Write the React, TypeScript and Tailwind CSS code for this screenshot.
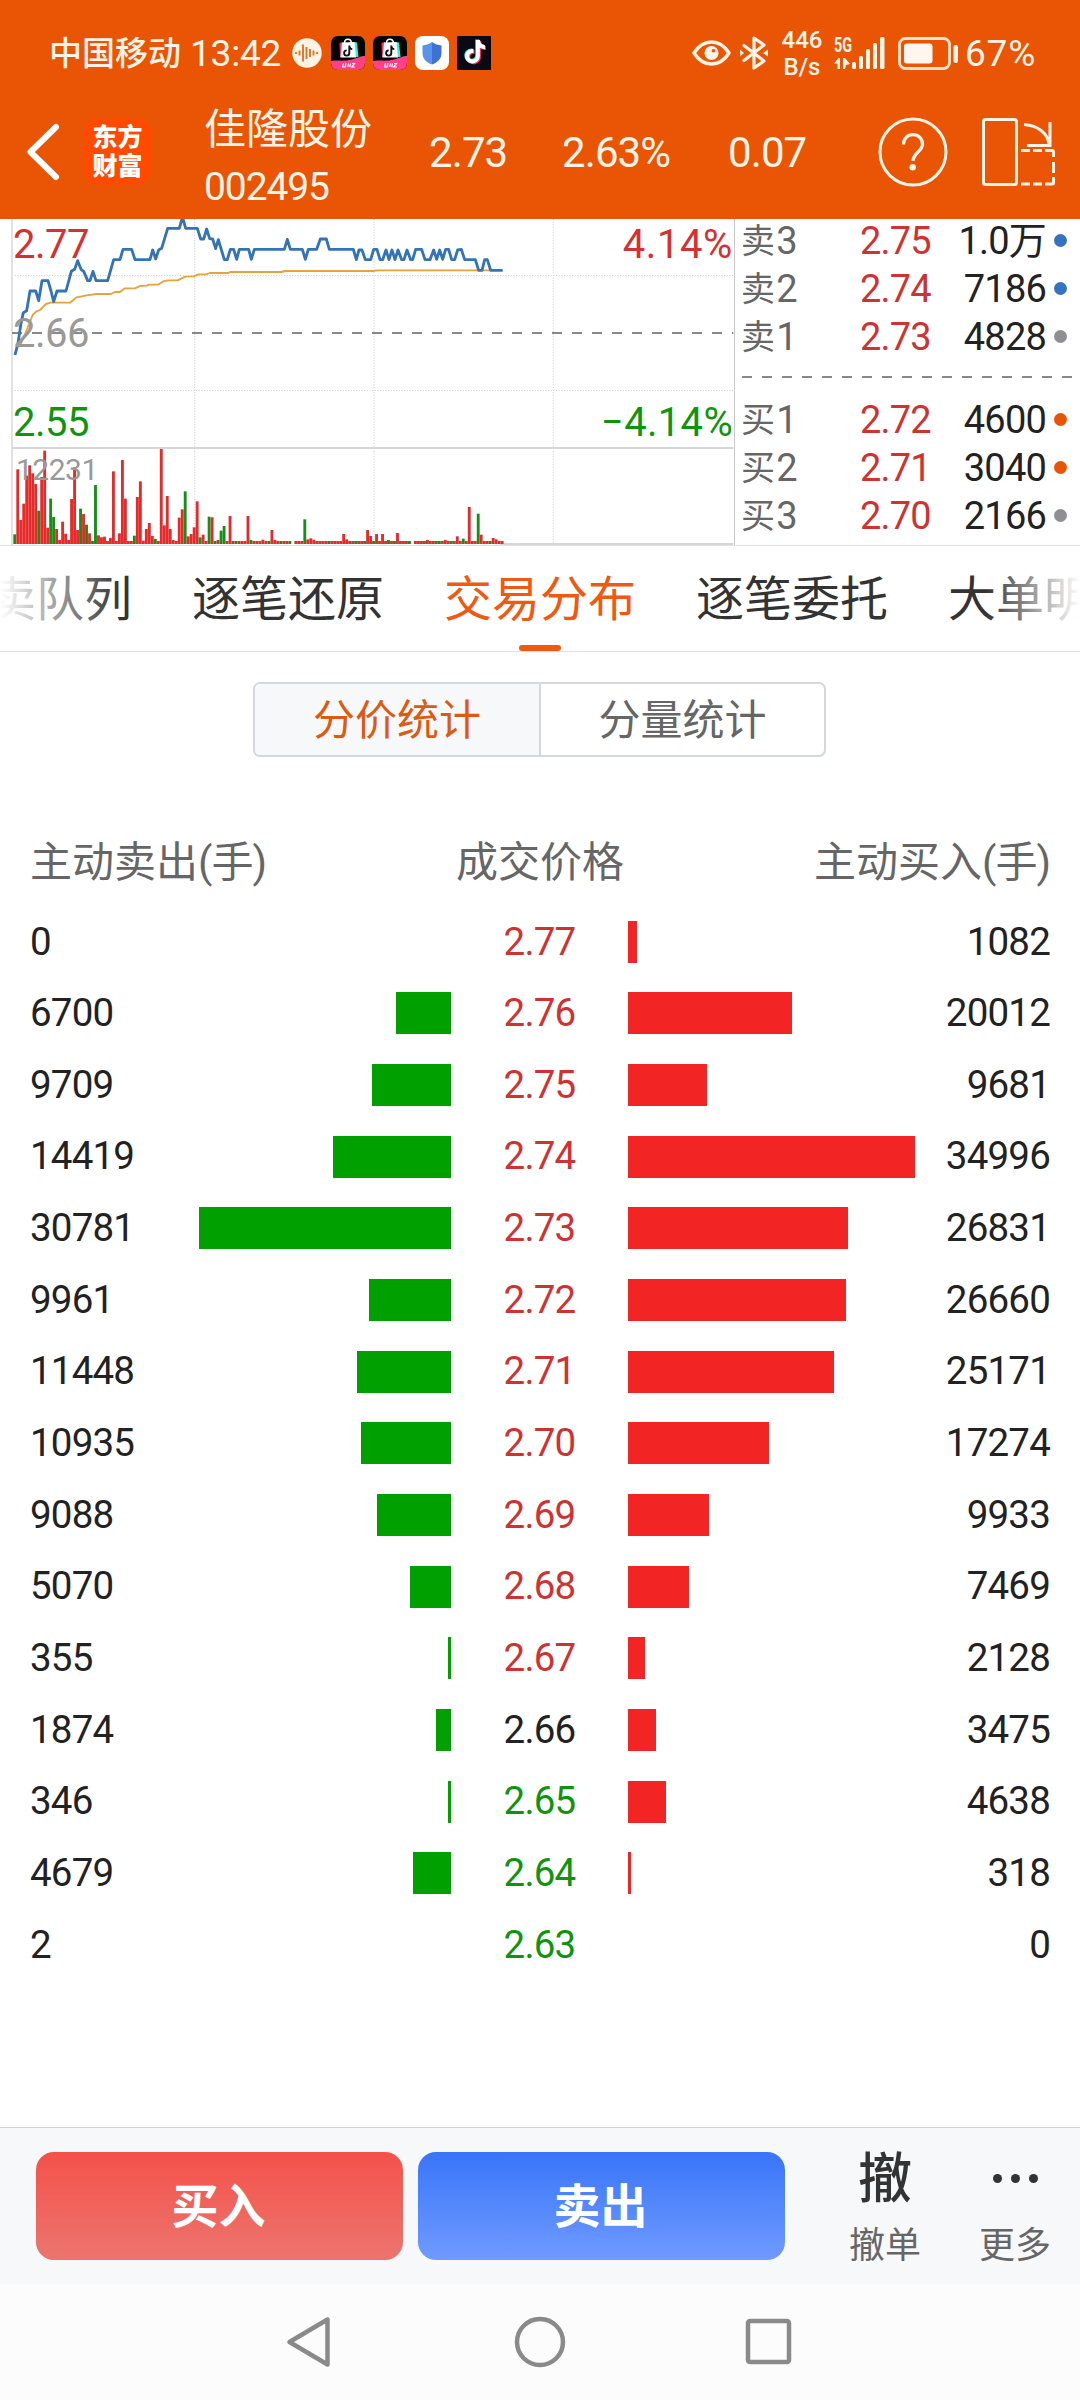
import type { ReactNode } from "react";
import clsx from "clsx";

type Tone = "up" | "down" | "flat";

interface PriceLevel {
  price: string;
  sell: number;
  buy: number;
  tone: Tone;
}

interface BookRow {
  label: string;
  price: string;
  volume: string;
  dot: string;
}

const LEVELS: PriceLevel[] = [
  { price: "2.77", sell: 0, buy: 1082, tone: "up" },
  { price: "2.76", sell: 6700, buy: 20012, tone: "up" },
  { price: "2.75", sell: 9709, buy: 9681, tone: "up" },
  { price: "2.74", sell: 14419, buy: 34996, tone: "up" },
  { price: "2.73", sell: 30781, buy: 26831, tone: "up" },
  { price: "2.72", sell: 9961, buy: 26660, tone: "up" },
  { price: "2.71", sell: 11448, buy: 25171, tone: "up" },
  { price: "2.70", sell: 10935, buy: 17274, tone: "up" },
  { price: "2.69", sell: 9088, buy: 9933, tone: "up" },
  { price: "2.68", sell: 5070, buy: 7469, tone: "up" },
  { price: "2.67", sell: 355, buy: 2128, tone: "up" },
  { price: "2.66", sell: 1874, buy: 3475, tone: "flat" },
  { price: "2.65", sell: 346, buy: 4638, tone: "down" },
  { price: "2.64", sell: 4679, buy: 318, tone: "down" },
  { price: "2.63", sell: 2, buy: 0, tone: "down" },
];

const SELLS: BookRow[] = [
  { label: "卖3", price: "2.75", volume: "1.0万", dot: "bg-[#3373c0]" },
  { label: "卖2", price: "2.74", volume: "7186", dot: "bg-[#3373c0]" },
  { label: "卖1", price: "2.73", volume: "4828", dot: "bg-[#8e8e93]" },
];

const BUYS: BookRow[] = [
  { label: "买1", price: "2.72", volume: "4600", dot: "bg-[#e95504]" },
  { label: "买2", price: "2.71", volume: "3040", dot: "bg-[#e95504]" },
  { label: "买3", price: "2.70", volume: "2166", dot: "bg-[#8e8e93]" },
];

const TABS = ["买卖队列", "逐笔还原", "交易分布", "逐笔委托", "大单明细"];

const MAX_VOLUME = 34996;
const MAX_BAR = 286.5;

const PRICE_LINE =
  "45,435 54,400 63,340 70,308 80,302 90,243 107,243 116,272 126,212 144,212 153,243 161,275 171,243 198,243 214,184 224,178 233,152 243,178 251,184 263,212 270,212 279,184 288,212 323,212 341,149 360,149 369,118 395,118 405,149 450,149 458,120 467,147 476,120 485,115 503,55 538,55 545,30 550,30 557,55 592,55 602,87 611,87 620,57 629,86 638,87 647,116 655,89 673,149 682,149 691,118 701,118 710,148 718,118 746,118 754,148 763,118 853,118 862,88 871,118 907,118 916,148 925,118 950,118 961,87 979,87 988,118 1060,118 1069,149 1077,120 1086,120 1096,149 1112,149 1121,118 1131,118 1140,149 1148,149 1158,120 1167,149 1176,120 1185,149 1194,120 1205,149 1212,149 1221,120 1232,149 1238,149 1247,118 1265,118 1275,149 1290,149 1301,120 1310,148 1319,120 1328,148 1337,118 1346,118 1355,149 1364,149 1373,120 1384,118 1394,149 1426,149 1436,181 1446,181 1454,149 1462,149 1472,181 1508,181";

const AVERAGE_LINE =
  "62,403 80,360 98,315 108,305 120,300 138,282 152,278 210,278 230,262 260,256 290,252 333,252 345,246 360,246 375,235 405,235 420,228 440,227 448,224 475,224 490,214 503,211 533,211 555,200 582,199 595,193 618,193 630,189 685,189 690,186 845,186 855,183 1120,183 1132,181 1470,181";

// One entry per minute, negative = falling minute (green), 0 = no trade
const VOLUMES = [
  -29, 224, 72, 121, 205, 236, 212, 180, -100, 201, 280, 49, -136, -81, 45, 12, 67, 31, 12, 135,
  230, 42, -106, 90, -58, 32, -9, -177, 26, 20, 22, 9, 18, 218, 9, 32, 252, 136, 9, 9,
  -25, 141, 188, 10, 45, 63, 24, -15, 9, 285, 56, 144, 45, 12, 9, 79, 104, -158, 23, 30,
  50, 128, -20, 28, 9, -82, 80, -9, 12, -40, -54, 9, 84, 9, -9, 9, 9, 9, 84, -12,
  9, 9, 9, 13, 9, -9, 42, 12, 9, -9, 9, 9, -9, 0, 9, 9, 9, -74, 14, 17,
  13, 9, 9, 9, 9, -9, 9, 9, 9, 9, 30, 14, 9, 9, -9, 9, 9, -9, 42, 24,
  -9, 30, 9, 30, 9, -12, 9, -9, 33, 9, 9, 9, -9, 0, 9, 9, 9, -9, 12, 9,
  9, -9, -9, 9, 12, 9, -9, 9, 23, 9, -16, 9, 111, 9, 9, -91, 28, 9, 9, -9,
  18, 14, 9, 9,
];

function StatusBar() {
  return (
    <div className="flex h-[106px] items-center text-[#fff3e6]">
      <span className="ml-[49px] w-[141px] text-[33px] leading-none font-medium">中国移动</span>
      <span className="w-[102px] text-[37px] leading-none tracking-[-0.2px]">13:42</span>
      <svg className="h-[30px] w-[30px]" viewBox="0 0 30 30">
        <circle cx="15" cy="15" r="14.7" fill="#fff3e6" />
        <path
          d="M4 14v2M7.500 12.500v5M11 6.500v17M14.500 9v12M18 11v8M21.500 12.500v5M25 14v2"
          stroke="#dd7425"
          strokeWidth="1.900"
        />
      </svg>
      <div className="ml-[9px] flex gap-2">
        <ShopIcon />
        <ShopIcon />
        <svg className="h-[34px] w-[34px]" viewBox="0 0 34 34">
          <rect width="34" height="34" rx="8" fill="#fff" />
          <path d="M17 6C14 8.500 10.500 9 7.500 9.500V17c0 6 4 9.500 9.500 11.500z" fill="#5c93ea" />
          <path d="M17 6c3 2.500 6.500 3 9.500 3.500V17c0 6-4 9.500-9.500 11.500z" fill="#3f70d4" />
        </svg>
        <svg className="h-[34px] w-[34px]" viewBox="0 0 34 34">
          <rect width="34" height="34" fill="#0b0a14" />
          <TikTokNote x={4} y={3} size={27} />
        </svg>
      </div>

      <div className="ml-[201px] flex items-center">
        <svg className="h-[26px] w-[39px]" viewBox="0 0 39 26">
          <path
            d="M2 13C7 5 13 2 19.500 2S32 5 37 13c-5 8-11 11-17.500 11S7 21 2 13z"
            fill="none"
            stroke="currentColor"
            strokeWidth="3.500"
            strokeLinejoin="round"
          />
          <circle cx="19.500" cy="13" r="7" fill="currentColor" />
          <circle cx="21.500" cy="10.800" r="1.800" fill="#e95504" />
        </svg>
        <svg className="ml-[9px] h-[34px] w-[28px]" viewBox="0 0 28 34">
          <path
            d="M4 9.500L24 25l-10 7V2l10 7L4 24.500"
            fill="none"
            stroke="currentColor"
            strokeWidth="3.200"
            strokeLinejoin="round"
            strokeLinecap="round"
          />
          <path d="M0 13.500l4 3.500-4 3.500zM28 13.500L23 17l5 3.500z" fill="currentColor" />
        </svg>
        <div className="ml-[12px] flex w-[44px] flex-col items-center pt-px text-[24px] leading-[27px] font-medium">
          <span>446</span>
          <span>B/s</span>
        </div>
        <div className="ml-[10px] flex h-[31px] w-[19px] flex-col justify-between">
          <span className="w-[19px] origin-left scale-x-[0.72] text-[20px] leading-[15px] font-bold">5G</span>
          <svg className="h-[11px] w-[19px]" viewBox="0 0 19 11">
            <path d="M0 5.500L4.500 0H6v11H3.500V5.500zM9 0h2l5 6-4 1-1 4H9z" fill="currentColor" />
          </svg>
        </div>
        <svg className="-ml-px h-[32px] w-[34px]" viewBox="0 0 34 32" fill="currentColor">
          <rect x="0" y="25" width="4" height="7" rx="1.500" />
          <rect x="7" y="19" width="4" height="13" rx="1.500" />
          <rect x="14" y="12" width="4" height="20" rx="1.500" />
          <rect x="21" y="6" width="4" height="26" rx="1.500" />
          <rect x="28" y="0" width="4.500" height="32" rx="1.500" />
        </svg>
        <svg className="ml-[12px] h-[33px] w-[61px]" viewBox="0 0 61 33">
          <rect x="1.500" y="1.500" width="50" height="30" rx="6" fill="none" stroke="#ffe3cb" strokeWidth="2.800" />
          <rect x="6" y="6.500" width="28.500" height="20" rx="3" fill="#fff6f0" />
          <rect x="55.500" y="8" width="4.500" height="18" rx="2" fill="#fff3e6" />
        </svg>
        <span className="ml-[6px] text-[37px] leading-none tracking-[0.8px]">67%</span>
      </div>
    </div>
  );
}

function TikTokNote({ x, y, size }: { x: number; y: number; size: number }) {
  const d =
    "M14.500 1h3.700c.4 3 2 4.800 4.800 5v3.800c-1.800 0-3.400-.5-4.800-1.500v7.900c0 4.300-3.200 7.300-7.200 7.300S4 20.500 4 16.600c0-4.200 3.500-7.300 8-6.900v3.900c-2.300-.5-4.100.9-4.100 2.900 0 1.900 1.500 3.200 3.200 3.200 2 0 3.400-1.400 3.400-3.600z";
  return (
    <svg x={x} y={y} width={size} height={size} viewBox="0 0 26 26">
      <path d={d} fill="#25f4ee" transform="translate(-.8 -.6)" />
      <path d={d} fill="#fe2c55" transform="translate(1 .8)" />
      <path d={d} fill="#fff" />
    </svg>
  );
}

function ShopIcon() {
  return (
    <svg className="h-[34px] w-[34px]" viewBox="0 0 34 34">
      <rect width="34" height="34" rx="7" fill="#050505" />
      <path d="M8.500 7l3-1-1.500 15H9z" fill="#fe2c55" />
      <path d="M23 6l3 .5L27.500 21H24z" fill="#25f4ee" />
      <path d="M11 6.500l12.500-.5 1.500 15.500H9.500z" fill="#fff" />
      <path d="M13.500 7c0-5 6.500-5 7 0" fill="none" stroke="#fff" strokeWidth="1.500" />
      <path d="M18.300 9.500V17a2.600 2.600 0 1 1-2.600-2.600M18.300 10.500c.5 1.800 1.500 2.500 3 2.600" fill="none" stroke="#111" strokeWidth="1.900" />
      <path d="M0 25c8-1 14 .5 21-1.500S30 20 34 20v7a7 7 0 0 1-7 7H7a7 7 0 0 1-7-7z" fill="#ff3f86" />
      <path d="M12.500 27l-.8 4h2.500l.8-4M17.500 27.500l-.7 3.500M19.500 27.500l-.7 3.500M21 27.500h2.500l-2.800 3.500h3" fill="none" stroke="#fff" strokeWidth="1.200" />
    </svg>
  );
}

function Header() {
  return (
    <header className="h-[219px] bg-[#e95504] text-[#fff3e6]">
      <StatusBar />
      <div className="flex h-[91px] items-center">
        <svg className="ml-[26px] h-[58px] w-[34px]" viewBox="0 0 34 58">
          <path d="M30 4L4.500 29 30 54" fill="none" stroke="#fff" strokeWidth="6" strokeLinecap="round" strokeLinejoin="round" />
        </svg>
        <div className="ml-6 flex h-[67px] w-[67px] flex-col items-center justify-center rounded-[14px] bg-[#ff4a00] text-[25px] leading-[29px] font-black text-white">
          <span>东方</span>
          <span>财富</span>
        </div>
        <div className="-mt-[7px] ml-[53px] flex w-[225px] flex-col self-start">
          <span className="h-[58px] text-[42px] leading-[61px]">佳隆股份</span>
          <span className="h-[58px] text-[39px] leading-[60px] tracking-[-1.1px]">002495</span>
        </div>
        <span className="w-[133px] pt-[2px] text-[42px] leading-none tracking-[-0.9px]">2.73</span>
        <span className="w-[166px] pt-[2px] text-[42px] leading-none tracking-[-0.9px]">2.63%</span>
        <span className="w-[150px] pt-[2px] text-[42px] leading-none tracking-[-0.9px]">0.07</span>
        <svg className="h-[70px] w-[70px]" viewBox="0 0 70 70" fill="none" stroke="currentColor">
          <circle cx="35" cy="35" r="33" strokeWidth="3" />
          <path d="M25.500 27.500c0-6 4-9.800 9.500-9.800s9.500 3.800 9.500 9.500c0 7-9.500 8.800-9.500 16.800" strokeWidth="3.300" />
          <circle cx="34.700" cy="50.300" r="3.200" fill="currentColor" stroke="none" />
        </svg>
        <svg className="ml-[34px] h-[68px] w-[74px]" viewBox="0 0 74 68" fill="none" stroke="currentColor" strokeWidth="3">
          <rect x="1.500" y="1.500" width="33" height="65" rx="2" />
          <path d="M42 6.500c14 1 24 9 25 20M68 4v23.500H45" />
          <path d="M39 32.500h9M51 32.500h9M63 32.500h7q1.500 0 1.500 1.500v5M71.500 44v11M71.500 59v6q0 1-1.500 1h-7M39 66h9M51 66h9" />
        </svg>
      </div>
    </header>
  );
}

function ChartLabel({ className, children }: { className: string; children: ReactNode }) {
  return <span className={clsx("absolute leading-[40px]", className)}>{children}</span>;
}

function TrendChart() {
  return (
    <div className="relative h-[326px] w-[736px] shrink-0 text-[40px] tracking-[-0.5px]">
      <svg className="block h-[326px] w-[736px]" viewBox="0 27 2208 978" fill="none">
        <g stroke="#c9c9c9" strokeWidth="3" strokeDasharray="3 5">
          <path d="M36 196.500H2200M36 541.500H2200M584 27V1002M1122 27V1002M1660 27V1002" />
        </g>
        <path d="M36 27V1005" stroke="#e2e2e2" strokeWidth="6" />
        <path d="M36 714H2200M1500 1002H2200" stroke="#d6d6d6" strokeWidth="6" />
        <path d="M2203.500 27V1005" stroke="#c8c8c8" strokeWidth="3" />
        <path d="M36 369H2200" stroke="#888" strokeWidth="6" strokeDasharray="30 30" />
        {VOLUMES.map((v, i) => (
          <rect
            key={i}
            x={40 + i * 8.97}
            y={1002 - Math.abs(v)}
            width={8.6}
            height={Math.abs(v)}
            fill={v < 0 ? "#159015" : "#e62a2a"}
          />
        ))}
        <polyline points={AVERAGE_LINE} stroke="#e9a23b" strokeWidth="5.500" strokeLinejoin="round" />
        <polyline points={PRICE_LINE} stroke="#3373b8" strokeWidth="8.500" strokeLinejoin="round" />
      </svg>
      <ChartLabel className="top-[6px] left-[13px] text-[#d63030]">2.77</ChartLabel>
      <ChartLabel className="top-[95px] left-[13px] text-[#999]">2.66</ChartLabel>
      <ChartLabel className="top-[184px] left-[13px] text-[#109410]">2.55</ChartLabel>
      <ChartLabel className="top-[231px] left-[16px] text-[30px] text-[#999]">12231</ChartLabel>
      <ChartLabel className="top-[6px] right-[3px] tracking-[0.6px] text-[#d63030]">4.14%</ChartLabel>
      <ChartLabel className="top-[184px] right-[3px] tracking-[0.3px] text-[#109410]">−4.14%</ChartLabel>
    </div>
  );
}

function BookLine({ row }: { row: BookRow }) {
  return (
    <div className="flex h-12 items-center text-[38px] leading-none tracking-[-0.8px]">
      <span className="flex w-[119px] items-center text-[#666]">
        <span className="text-[34px]">{row.label[0]}</span>
        <span className="ml-[2px]">{row.label[1]}</span>
      </span>
      <span className="text-[#cf3232]">{row.price}</span>
      <span className="flex-1 text-right text-[#222]">{row.volume}</span>
      <span className="mr-[13px] mb-[2px] ml-[8px]">
        <i className={clsx("block h-[13px] w-[13px] rounded-full", row.dot)} />
      </span>
    </div>
  );
}

function OrderBook() {
  return (
    <div className="flex-1 pl-[5px]">
      <div className="-mt-[2px]">
        {SELLS.map((row) => (
          <BookLine key={row.label} row={row} />
        ))}
      </div>
      <div className="mt-[15px] mr-[4px] ml-px h-[2px] bg-[repeating-linear-gradient(90deg,#888_0_10px,transparent_10px_20px)]" />
      <div className="mt-[18px]">
        {BUYS.map((row) => (
          <BookLine key={row.label} row={row} />
        ))}
      </div>
    </div>
  );
}

function Tabs() {
  return (
    <nav className="relative h-[106px] overflow-hidden border-b border-[#e2e2e2]">
      <div className="-ml-[60px] flex w-max gap-[60px] text-[48px] leading-[108px] text-[#333]">
        {TABS.map((tab) => (
          <span key={tab} className={clsx("relative h-[105px]", tab === "交易分布" && "text-[#f0590f]")}>
            {tab}
            {tab === "交易分布" && (
              <span className="absolute bottom-0 left-[75px] h-[6px] w-[42px] rounded-[3px] bg-[#f0590f]" />
            )}
          </span>
        ))}
      </div>
      <div className="absolute top-0 left-0 h-[104px] w-[120px] bg-linear-to-r from-white to-transparent" />
      <div className="absolute top-0 right-0 h-[104px] w-[95px] bg-linear-to-l from-white to-transparent" />
    </nav>
  );
}

function Segmented() {
  return (
    <div className="mt-[30px] ml-[253px] flex h-[75px] w-[573px] overflow-hidden rounded-[7px] border-2 border-[#d4d7db] text-center text-[42px] leading-[74px]">
      <span className="w-[286px] border-r-2 border-[#d4d7db] bg-[#f7f8fa] text-[#dd5a14]">分价统计</span>
      <span className="flex-1 text-[#666]">分量统计</span>
    </div>
  );
}

function LevelRow({ level }: { level: PriceLevel }) {
  const sellWidth = (level.sell / MAX_VOLUME) * MAX_BAR;
  const buyWidth = (level.buy / MAX_VOLUME) * MAX_BAR;

  return (
    <div className="flex h-[71.65px] items-center text-[38.5px] leading-none tracking-[-0.8px] text-[#222]">
      <span className="w-[169px]">{level.sell}</span>
      <div className="flex w-[252px] justify-end">
        {sellWidth > 1 && <div className="h-[42px] bg-[#00a000]" style={{ width: sellWidth }} />}
      </div>
      <span
        className={clsx(
          "w-[177px] text-center",
          level.tone === "up" && "text-[#cf3232]",
          level.tone === "down" && "text-[#109410]",
        )}
      >
        {level.price}
      </span>
      <div className="w-[287px]">
        {buyWidth > 1 && <div className="h-[42px] bg-[#f22424]" style={{ width: buyWidth }} />}
      </div>
      <span className="flex-1 text-right">{level.buy}</span>
    </div>
  );
}

function Distribution() {
  return (
    <section className="pr-[30px] pl-[30px]">
      <div className="mt-[74px] grid h-[64px] grid-cols-3 items-center text-[42px] leading-none text-[#666]">
        <span>
          主动卖出<span className="tracking-[-1px]">(手)</span>
        </span>
        <span className="text-center">成交价格</span>
        <span className="text-right">
          主动买入<span className="tracking-[-1px]">(手)</span>
        </span>
      </div>
      <div className="mt-[11px]">
        {LEVELS.map((level) => (
          <LevelRow key={level.price} level={level} />
        ))}
      </div>
    </section>
  );
}

function ActionBar() {
  return (
    <div className="flex h-[157px] items-center border-t border-[#d0d4d9] bg-[#f7f8fa] pl-[36px]">
      <button className="h-[108px] w-[367px] rounded-[18px] bg-linear-to-b from-[#f4504a] to-[#ec746e] pt-[3px] pr-[2px] text-[47px] font-bold text-white">
        买入
      </button>
      <button className="ml-[15px] h-[108px] w-[367px] rounded-[18px] bg-linear-to-b from-[#3974f8] to-[#6f9aff] pt-[3px] pr-[2px] text-[47px] font-bold text-white">
        卖出
      </button>
      <div className="ml-[64px] flex h-[108px] w-[72px] flex-col items-center">
        <span className="h-[52px] text-[54px] leading-[56px] font-medium text-[#333]">撤</span>
        <span className="mt-[14px] text-[36px] leading-[56px] text-[#666]">撤单</span>
      </div>
      <div className="ml-[58px] flex h-[108px] w-[72px] flex-col items-center">
        <div className="flex h-[52px] shrink-0 items-center gap-[9px]">
          <i className="h-[9px] w-[9px] rounded-full bg-[#333]" />
          <i className="h-[9px] w-[9px] rounded-full bg-[#333]" />
          <i className="h-[9px] w-[9px] rounded-full bg-[#333]" />
        </div>
        <span className="mt-[14px] text-[36px] leading-[56px] text-[#666]">更多</span>
      </div>
    </div>
  );
}

function SystemNav() {
  return (
    <div className="flex h-[116px] items-center bg-[#fcfcfc] pl-[286px]">
      <svg className="h-[52px] w-[46px]" viewBox="0 0 46 52" fill="none" stroke="#8a8a8a" strokeWidth="4.500" strokeLinejoin="round">
        <path d="M41.500 3.500v45L3.500 26z" />
      </svg>
      <svg className="ml-[182px] h-[52px] w-[52px]" viewBox="0 0 52 52" fill="none" stroke="#8a8a8a" strokeWidth="4.500">
        <circle cx="26" cy="26" r="23" />
      </svg>
      <svg className="ml-[178px] h-[50px] w-[50px]" viewBox="0 0 50 50" fill="none" stroke="#8a8a8a" strokeWidth="4.500">
        <rect x="4" y="4" width="41" height="41" rx="2" />
      </svg>
    </div>
  );
}

export default function App() {
  return (
    <div className="flex h-[2400px] w-[1080px] flex-col overflow-hidden bg-white [font-family:Roboto,'Noto_Sans_CJK_SC',sans-serif]">
      <Header />
      <div className="flex h-[327px] border-b border-[#e2e2e2]">
        <TrendChart />
        <OrderBook />
      </div>
      <Tabs />
      <Segmented />
      <Distribution />
      <div className="mt-auto">
        <ActionBar />
        <SystemNav />
      </div>
    </div>
  );
}
